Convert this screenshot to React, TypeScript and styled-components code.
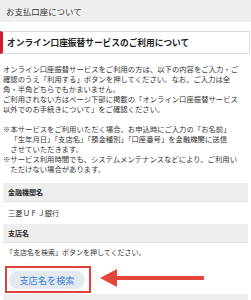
import React from "react";
import styled, { createGlobalStyle } from "styled-components";

const GlobalStyle = createGlobalStyle`
  html, body {
    margin: 0;
    padding: 0;
    background: #ffffff;
  }
  body {
    font-family: "Noto Sans CJK JP", "Noto Sans", sans-serif;
    color: #333333;
  }
  * { box-sizing: border-box; }
`;

const Page = styled.div`
  width: 251px;
  height: 300px;
  overflow: hidden;
`;

const Header = styled.div`
  height: 22px;
  background: #efefef;
  padding-left: 6px;
  display: flex;
  align-items: center;
  font-size: 8.45px;
  color: #333333;
`;

const TitleBox = styled.h2`
  margin: 9px 1px 0 0;
  height: 22.5px;
  border: 1px solid #dcdcdc;
  border-left: 3px solid #cf1d2a;
  padding-left: 4px;
  display: flex;
  align-items: center;
  font-size: 8.7px;
  font-weight: 700;
  color: #222222;
`;

const Content = styled.div`
  padding: 10px 3px 0;
`;

const Lead = styled.p`
  margin: 0;
  font-size: 7.35px;
  line-height: 10px;
  white-space: nowrap;
`;

const Notes = styled.ul`
  margin: 10px 0 0;
  padding: 0;
  list-style: none;
  font-size: 7.35px;
  line-height: 10px;
  white-space: nowrap;
`;

const Note = styled.li`
  padding-left: 1em;
  text-indent: -1em;
`;

const FieldLabel = styled.div<{ $first?: boolean }>`
  margin-top: ${(p) => (p.$first ? "9px" : "0")};
  height: 19.5px;
  background: #eeeeee;
  border-bottom: 1px solid #e0e0e0;
  padding-left: 5px;
  display: flex;
  align-items: center;
  font-size: 7px;
  font-weight: 700;
  color: #2a2a2a;
`;

const FieldValue = styled.div`
  height: 21.5px;
  padding-left: 5px;
  display: flex;
  align-items: center;
  font-size: 7.35px;
`;

const FieldBody = styled.div`
  padding: 4px 0 1px 3px;
`;

const Hint = styled.p`
  margin: 0;
  font-size: 7px;
  line-height: 10px;
`;

const ButtonRow = styled.div`
  margin-top: 8.5px;
  display: flex;
  align-items: flex-start;
`;

const Highlight = styled.div`
  margin-left: -1px;
  width: 86px;
  height: 27.6px;
  border: 2.7px solid #e2403b;
  padding: 3px 0 0 2px;
`;

const SearchButton = styled.button`
  width: 76px;
  height: 18.3px;
  border: none;
  border-radius: 10px;
  background: #e3e9ef;
  color: #3b7fd8;
  font-family: "Noto Sans CJK JP", sans-serif;
  font-size: 9.2px;
  padding: 0;
  display: flex;
  align-items: center;
  justify-content: center;
  cursor: pointer;
`;

const Arrow = styled.svg`
  margin: 3.6px 0 0 8.6px;
  flex: none;
`;

export default function App() {
  return (
    <>
      <GlobalStyle />
      <Page>
        <Header>お支払口座について</Header>
        <TitleBox>オンライン口座振替サービスのご利用について</TitleBox>
        <Content>
          <Lead>
            オンライン口座振替サービスをご利用の方は、以下の内容をご入力・ご
            <br />
            確認のうえ「利用する」ボタンを押してください。なお、ご入力は全
            <br />
            角・半角どちらでもかまいません。
            <br />
            ご利用されない方はページ下部に掲載の「オンライン口座振替サービス
            <br />
            以外でのお手続きについて」をご確認ください。
          </Lead>
          <Notes>
            <Note>
              ※本サービスをご利用いただく場合、お申込時にご入力の「お名前」
              <br />
              「生年月日」「支店名」「預金種別」「口座番号」を金融機関に送信
              <br />
              させていただきます。
            </Note>
            <Note>
              ※サービス利用時間でも、システムメンテナンスなどにより、ご利用い
              <br />
              ただけない場合があります。
            </Note>
          </Notes>
          <FieldLabel $first>金融機関名</FieldLabel>
          <FieldValue>三菱ＵＦＪ銀行</FieldValue>
          <FieldLabel>支店名</FieldLabel>
          <FieldBody>
            <Hint>「支店名を検索」ボタンを押してください。</Hint>
            <ButtonRow>
              <Highlight>
                <SearchButton type="button">支店名を検索</SearchButton>
              </Highlight>
              <Arrow width="104" height="18" viewBox="0 0 104 18">
                <polygon
                  points="0,9 17,0 17,7 104,7 104,11 17,11 17,18"
                  fill="#e4463c"
                />
              </Arrow>
            </ButtonRow>
          </FieldBody>
          <FieldLabel aria-hidden="true" />
        </Content>
      </Page>
    </>
  );
}
